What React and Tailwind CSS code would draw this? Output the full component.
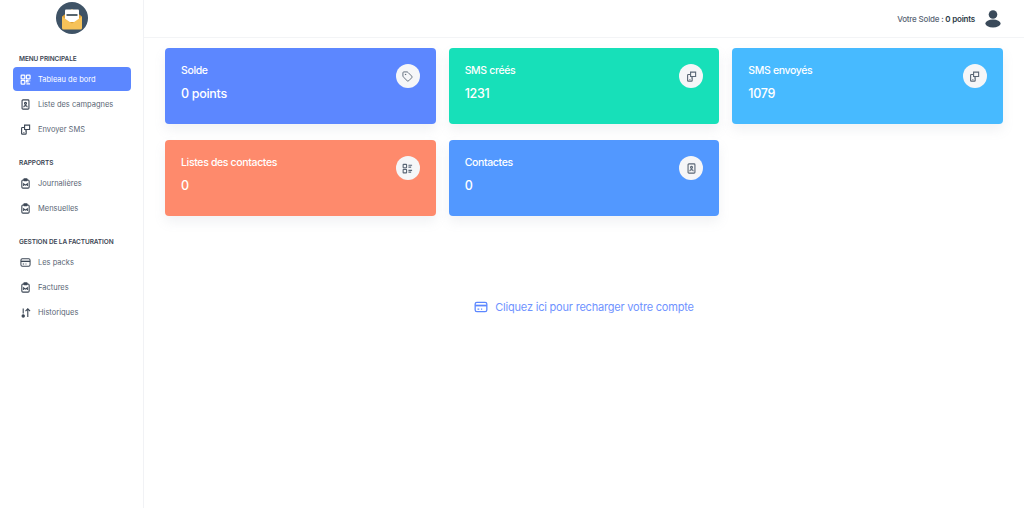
import { Tag } from 'lucide-react'

function DashIcon({ className }) {
  return (
    <svg viewBox="0 0 24 24" fill="none" stroke="currentColor" strokeWidth="2.600" className={className}>
      <rect x="2.500" y="2.500" width="8" height="8" rx="1.500" />
      <rect x="14" y="2.500" width="8" height="8" rx="1.500" />
      <rect x="2.500" y="14" width="8" height="8" rx="1.500" />
      <path d="M14 14h3.500v3.500H14zM21.500 14v2M14 21.500h8" />
    </svg>
  )
}

function ListIcon({ className }) {
  return (
    <svg viewBox="0 0 24 24" fill="none" stroke="currentColor" strokeWidth="2.400" className={className}>
      <rect x="2.500" y="3" width="7.500" height="7.500" rx="1" />
      <rect x="2.500" y="14" width="7.500" height="7.500" rx="1" />
      <path d="M14 5h8M14 9h6M14 16h8M14 20h6" />
    </svg>
  )
}

function ClipIcon({ className }) {
  return (
    <svg viewBox="0 0 24 24" fill="none" stroke="currentColor" strokeWidth="2.400" className={className}>
      <rect x="4" y="4.500" width="16" height="17.500" rx="2.500" />
      <rect x="8.500" y="2" width="7" height="4" rx="1" fill="currentColor" />
      <path d="M8 17.500v-5l4 3 4-3v5" />
    </svg>
  )
}

function PhoneIcon({ className }) {
  return (
    <svg viewBox="0 0 24 24" fill="none" stroke="currentColor" strokeWidth="2.400" className={className}>
      <rect x="4.500" y="2" width="15" height="20" rx="2" />
      <circle cx="12" cy="9.500" r="2.200" />
      <path d="M8 18c.5-2.300 2.200-3.500 4-3.500s3.500 1.200 4 3.500" />
    </svg>
  )
}

function SendIcon({ className }) {
  return (
    <svg viewBox="0 0 24 24" fill="none" stroke="currentColor" strokeWidth="2.400" className={className}>
      <path d="M10 7.500H5A1.500 1.500 0 0 0 3.500 9v11.500A1.500 1.500 0 0 0 5 22h7a1.500 1.500 0 0 0 1.500-1.500V15" />
      <path d="M10 2.500h11v9.500h-6l-2 2v-2h-3z" />
      <path d="M7.500 18.500h2" />
    </svg>
  )
}

function SortIcon({ className }) {
  return (
    <svg viewBox="0 0 24 24" fill="none" stroke="currentColor" strokeWidth="2.400" className={className}>
      <path d="M7 3v11M17 22V4M12 9l5-5 5 5" />
      <circle cx="7" cy="19.500" r="2.500" fill="currentColor" />
    </svg>
  )
}

function CardIcon({ className }) {
  return (
    <svg viewBox="0 0 24 24" fill="none" stroke="currentColor" strokeWidth="2.200" className={className}>
      <rect x="2" y="4" width="20" height="16" rx="3" />
      <path d="M2 9.500h20" strokeWidth="3" />
      <path d="M6 15.500h3M12 15.500h2" />
    </svg>
  )
}

function UserIcon({ className }) {
  return (
    <svg viewBox="0 0 16 18" className={className}>
      <circle cx="8" cy="4.500" r="4.300" fill="#3a4a5a" />
      <ellipse cx="8" cy="13.500" rx="7.600" ry="4" fill="#3a4a5a" />
    </svg>
  )
}

function Logo() {
  return (
    <div className="flex h-8 w-8 items-center justify-center rounded-full bg-[#3f5366]">
      <svg viewBox="0 0 32 32" className="h-8 w-8">
        <path d="M6 14.500 16 7l10 7.500V26H6z" fill="#dda23a" />
        <path d="M9 8.500q0-1 1-1h12q1 0 1 1V20H9z" fill="#ffffff" />
        <rect x="10.500" y="12" width="11" height="2" fill="#56656f" />
        <path d="M6 14.500 16 21.500l10-7V26a1.500 1.500 0 0 1-1.500 1.500h-17A1.500 1.500 0 0 1 6 26z" fill="#f6c259" />
      </svg>
    </div>
  )
}

const menuGroups = [
  {
    title: 'MENU PRINCIPALE',
    items: [
      { label: 'Tableau de bord', Icon: DashIcon, active: true },
      { label: 'Liste des campagnes', Icon: PhoneIcon },
      { label: 'Envoyer SMS', Icon: SendIcon },
    ],
  },
  {
    title: 'RAPPORTS',
    items: [
      { label: 'Journalières', Icon: ClipIcon },
      { label: 'Mensuelles', Icon: ClipIcon },
    ],
  },
  {
    title: 'GESTION DE LA FACTURATION',
    items: [
      { label: 'Les packs', Icon: CardIcon },
      { label: 'Factures', Icon: ClipIcon },
      { label: 'Historiques', Icon: SortIcon },
    ],
  },
]

const cards = [
  { title: 'Solde', value: '0 points', bg: 'bg-[#5c87ff]', Icon: Tag },
  { title: 'SMS créés', value: '1231', bg: 'bg-[#17e0b9]', Icon: SendIcon },
  { title: 'SMS envoyés', value: '1079', bg: 'bg-[#47baff]', Icon: SendIcon },
  { title: 'Listes des contactes', value: '0', bg: 'bg-[#fe8a6c]', Icon: ListIcon },
  { title: 'Contactes', value: '0', bg: 'bg-[#5298ff]', Icon: PhoneIcon },
]

function StatCard({ card }) {
  const { Icon } = card
  return (
    <div className={`flex h-[76px] justify-between rounded-[4px] p-4 shadow-[0_6px_12px_rgba(140,152,164,0.12)] ${card.bg}`}>
      <div className="pt-[1px] text-white">
        <p className="text-[10.500px] leading-[12px] font-medium tracking-[-0.35px]">{card.title}</p>
        <p className="mt-[9px] text-[12.500px] leading-[16px] font-medium tracking-[-0.3px]">{card.value}</p>
      </div>
      <div className="flex h-6 w-6 items-center justify-center rounded-full bg-[#f5f6f8] text-[#5a6675]">
        <Icon className="h-[11px] w-[11px]" />
      </div>
    </div>
  )
}

function App() {
  return (
    <div className="flex min-h-[508px] bg-white font-['Inter','Noto_Sans',sans-serif]">
      <aside className="w-[144px] shrink-0 border-r border-[#f1f2f5]">
        <div className="flex justify-center pt-[2px]">
          <Logo />
        </div>
        <nav className="mt-5 flex flex-col gap-[15px] pr-3 pl-[13px]">
          {menuGroups.map((group, idx) => (
            <div key={group.title} className={idx === 0 ? '' : 'mt-[2px]'}>
              <p className="px-[6px] text-[6.500px] leading-[10px] font-semibold tracking-[-0.1px] text-[#3b4654]">{group.title}</p>
              <ul className="mt-[3px] flex flex-col gap-[1px]">
                {group.items.map(({ label, Icon, active }) => (
                  <li
                    key={label}
                    className={`flex h-6 items-center gap-[7px] rounded-[4px] px-[7px] text-[7.500px] ${
                      active ? 'bg-[#5c87ff] text-white' : 'text-[#5a6675]'
                    }`}
                  >
                    <Icon className={`h-[11px] w-[11px] shrink-0 ${active ? 'text-white' : 'text-[#3b4654]'}`} />
                    <span className="pt-[2px]">{label}</span>
                  </li>
                ))}
              </ul>
            </div>
          ))}
        </nav>
      </aside>

      <div className="min-w-0 flex-1">
        <header className="flex h-[38px] items-center justify-end gap-[10px] border-b border-[#f3f4f6] pr-[23px]">
          <p className="text-[8px] font-medium tracking-[-0.2px] text-[#5a6675]">
            Votre Solde : <span className="font-semibold text-[#2c3a47]">0 points</span>
          </p>
          <UserIcon className="h-[18px] w-4" />
        </header>

        <main className="pt-[10px] pr-[21px] pl-[21px]">
          <div className="grid grid-cols-3 gap-x-[13px] gap-y-4">
            {cards.map((card) => (
              <StatCard key={card.title} card={card} />
            ))}
          </div>
          <div className="mt-[83px] flex items-center justify-center gap-[7px] text-[11px] tracking-[-0.2px] text-[#6f93ff]">
            <CardIcon className="h-[14px] w-[14px] text-[#5c87ff]" />
            <span>Cliquez ici pour recharger votre compte</span>
          </div>
        </main>
      </div>
    </div>
  )
}

export default App
